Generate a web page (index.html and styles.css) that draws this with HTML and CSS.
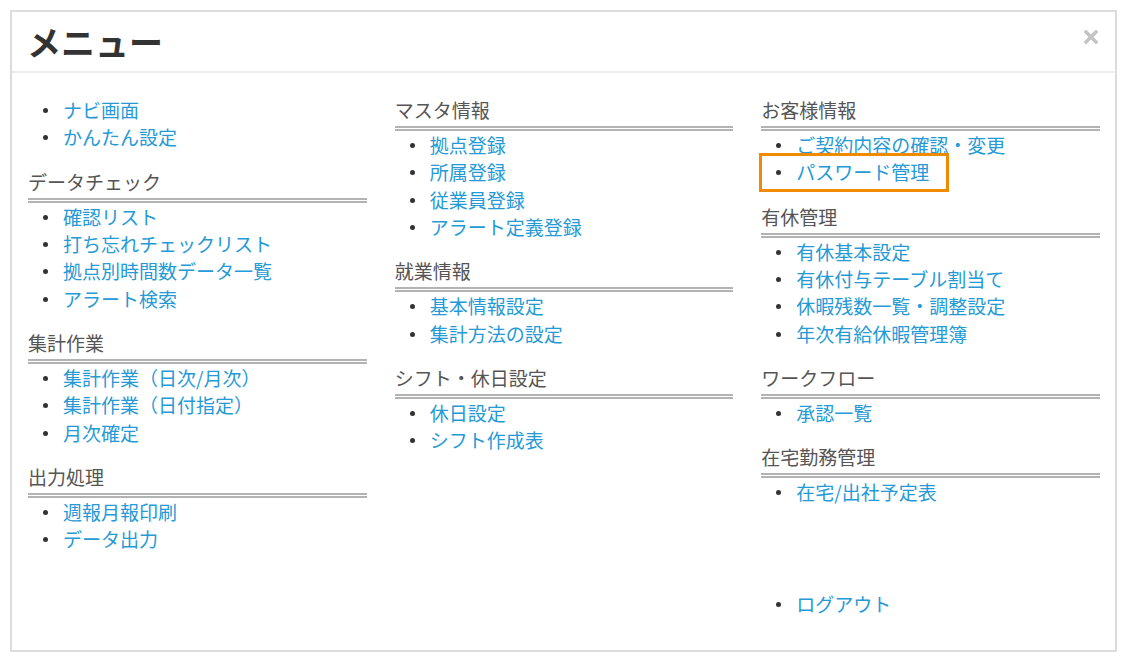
FILE: index.html
```html
<!DOCTYPE html>
<html lang="ja">
<head>
<meta charset="utf-8">
<title>メニュー</title>
<link rel="stylesheet" href="styles.css">
</head>
<body>
<div class="modal">
  <div class="modal-header">
    <h2 class="modal-title">メニュー</h2>
    <button class="close" type="button" aria-label="閉じる">
      <svg width="14" height="14" viewBox="0 0 14 14"><path d="M2 2 L12 12 M12 2 L2 12" stroke="#c4c4c4" stroke-width="3.6" stroke-linecap="square"/></svg>
    </button>
  </div>
  <div class="modal-body">
    <div class="col">
      <div class="section">
        <ul class="menu">
          <li><a href="#">ナビ画面</a></li>
          <li><a href="#">かんたん設定</a></li>
        </ul>
      </div>
      <div class="section">
        <h4 class="heading">データチェック</h4>
        <ul class="menu">
          <li><a href="#">確認リスト</a></li>
          <li><a href="#">打ち忘れチェックリスト</a></li>
          <li><a href="#">拠点別時間数データ一覧</a></li>
          <li><a href="#">アラート検索</a></li>
        </ul>
      </div>
      <div class="section">
        <h4 class="heading">集計作業</h4>
        <ul class="menu">
          <li><a href="#">集計作業（日次/月次）</a></li>
          <li><a href="#">集計作業（日付指定）</a></li>
          <li><a href="#">月次確定</a></li>
        </ul>
      </div>
      <div class="section">
        <h4 class="heading">出力処理</h4>
        <ul class="menu">
          <li><a href="#">週報月報印刷</a></li>
          <li><a href="#">データ出力</a></li>
        </ul>
      </div>
    </div>
    <div class="col">
      <div class="section">
        <h4 class="heading">マスタ情報</h4>
        <ul class="menu">
          <li><a href="#">拠点登録</a></li>
          <li><a href="#">所属登録</a></li>
          <li><a href="#">従業員登録</a></li>
          <li><a href="#">アラート定義登録</a></li>
        </ul>
      </div>
      <div class="section">
        <h4 class="heading">就業情報</h4>
        <ul class="menu">
          <li><a href="#">基本情報設定</a></li>
          <li><a href="#">集計方法の設定</a></li>
        </ul>
      </div>
      <div class="section">
        <h4 class="heading">シフト・休日設定</h4>
        <ul class="menu">
          <li><a href="#">休日設定</a></li>
          <li><a href="#">シフト作成表</a></li>
        </ul>
      </div>
    </div>
    <div class="col">
      <div class="section">
        <h4 class="heading">お客様情報</h4>
        <ul class="menu">
          <li><a href="#">ご契約内容の確認・変更</a></li>
          <li class="highlight"><a href="#">パスワード管理</a></li>
        </ul>
      </div>
      <div class="section">
        <h4 class="heading">有休管理</h4>
        <ul class="menu">
          <li><a href="#">有休基本設定</a></li>
          <li><a href="#">有休付与テーブル割当て</a></li>
          <li><a href="#">休暇残数一覧・調整設定</a></li>
          <li><a href="#">年次有給休暇管理簿</a></li>
        </ul>
      </div>
      <div class="section">
        <h4 class="heading">ワークフロー</h4>
        <ul class="menu">
          <li><a href="#">承認一覧</a></li>
        </ul>
      </div>
      <div class="section">
        <h4 class="heading">在宅勤務管理</h4>
        <ul class="menu">
          <li><a href="#">在宅/出社予定表</a></li>
        </ul>
      </div>
      <ul class="menu logout">
        <li><a href="#">ログアウト</a></li>
      </ul>
    </div>
  </div>
</div>
</body>
</html>
```

FILE: styles.css
```css
*, *::before, *::after { box-sizing: border-box; }

body {
  margin: 0;
  background: #fff;
  font-family: "Noto Sans CJK JP", "Noto Sans", sans-serif;
}

.modal {
  margin: 10px 0 0 10px;
  width: 1107px;
  height: 642px;
  border: 2px solid #dcdcdc;
  background: #fff;
}

.modal-header {
  height: 61px;
  border-bottom: 2px solid #eeeeee;
  display: flex;
  align-items: center;
  justify-content: space-between;
  padding: 0 17px 0 15px;
}

.modal-title {
  margin: 0;
  font-size: 34px;
  font-weight: bold;
  color: #333;
  line-height: 1;
}

.close {
  border: 0;
  background: none;
  padding: 0;
  margin: 0 0 10px 0;
  width: 14px;
  height: 14px;
  display: flex;
  cursor: pointer;
}

.modal-body {
  display: grid;
  grid-template-columns: repeat(3, 1fr);
  column-gap: 28px;
  padding: 23px 15px 0 16px;
}

.section + .section {
  margin-top: 17px;
}

.heading {
  margin: 0;
  font-size: 19px;
  font-weight: normal;
  line-height: 27px;
  color: #555;
  padding-bottom: 3px;
  border-bottom: 5px double #b3b3b3;
}

.menu {
  list-style: none;
  margin: 0;
  padding: 0;
}

.menu li {
  position: relative;
  padding-left: 35px;
  font-size: 19px;
  line-height: 27.33px;
}

.menu li::before {
  content: "";
  position: absolute;
  left: 15px;
  top: 12px;
  width: 5px;
  height: 5px;
  border-radius: 50%;
  background: #333;
}

.menu a {
  color: #259ad6;
  text-decoration: none;
}

.highlight::after {
  content: "";
  position: absolute;
  left: -2px;
  top: -5px;
  width: 190px;
  height: 39px;
  border: 3px solid #f08a00;
}

.logout {
  margin-top: 84px;
}
```
